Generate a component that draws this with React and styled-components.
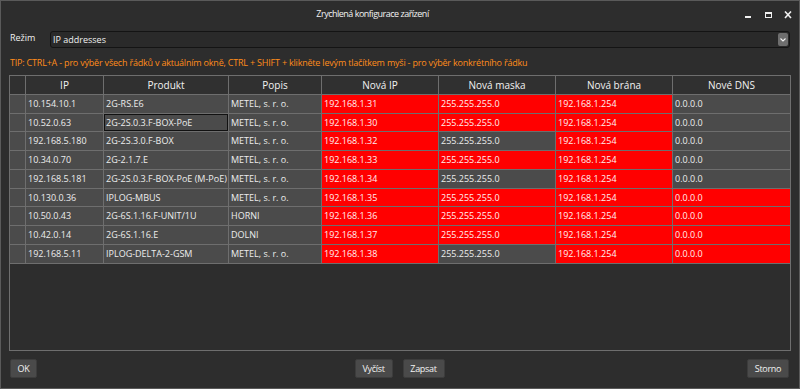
import React from "react";
import styled, { createGlobalStyle } from "styled-components";

const Global = createGlobalStyle`
  html, body { margin: 0; padding: 0; background: #2d2d2d; }
  body { font-family: "Open Sans", "Noto Sans", "DejaVu Sans", sans-serif; }
  * { box-sizing: border-box; }
`;

const Window = styled.div`
  width: 800px;
  height: 389px;
  border: 1px solid #5a5a5a;
  background: #2d2d2d;
  display: flex;
  flex-direction: column;
  color: #f0f0f0;
  overflow: hidden;
`;

const TitleBar = styled.div`
  height: 25px;
  display: flex;
  align-items: center;
  flex: none;
`;

const Title = styled.div`
  flex: 1;
  text-align: center;
  font-size: 9px;
  letter-spacing: -0.5px;
  color: #f2f2f2;
`;

const Controls = styled.div`
  display: flex;
  align-items: center;
  gap: 12px;
  padding-right: 7px;
  padding-top: 2px;
`;

const ModeRow = styled.div`
  display: flex;
  align-items: flex-start;
  margin-top: 5px;
  padding: 0 9px 0 9px;
  flex: none;
`;

const Label = styled.div`
  width: 40px;
  font-size: 9px;
  line-height: 12px;
  padding-top: 1px;
`;

const Select = styled.div`
  flex: 1;
  height: 17px;
  border: 1px solid #141414;
  border-radius: 3px;
  background: #2a2a2a;
  display: flex;
  align-items: center;
  justify-content: space-between;
  padding: 0 1px 0 2px;
  font-size: 9px;
`;

const Arrow = styled.div`
  width: 10px;
  height: 13px;
  border-radius: 2px;
  background: #6e6e6e;
  display: flex;
  align-items: center;
  justify-content: center;
`;

const Tip = styled.div`
  margin-top: 9px;
  padding-left: 9px;
  font-size: 9px;
  letter-spacing: -0.2px;
  line-height: 12px;
  color: #ff8c1a;
  white-space: nowrap;
  flex: none;
`;

const TableFrame = styled.div`
  margin: 6px 8px 0 8px;
  height: 276px;
  border: 1px solid #6e6e6e;
  background: #2d2d2d;
  overflow: hidden;
  flex: none;
`;

const Grid = styled.div`
  display: grid;
  grid-template-columns: 15px 77px 124px 92px 116px 116px 116px 117px;
  grid-template-rows: 18px;
  grid-auto-rows: 17.74px;
  gap: 1px;
  padding-bottom: 1px;
  background: #6e6e6e;
`;

const HeadCell = styled.div`
  background: #303030;
  font-size: 10px;
  line-height: 18px;
  text-align: center;
  color: #f2f2f2;
  white-space: nowrap;
  overflow: hidden;
`;

const Cell = styled.div`
  background: ${(p) => (p.$red ? "#ff0000" : "#4b4b4b")};
  color: ${(p) => (p.$red ? "#fff0f0" : "#ededed")};
  box-shadow: ${(p) => (p.$focused ? "inset 0 0 0 1px #111" : "none")};
  font-size: 9px;
  line-height: 17.74px;
  padding-left: 2px;
  white-space: nowrap;
  overflow: hidden;
`;

const Footer = styled.div`
  display: grid;
  grid-template-columns: 1fr auto 1fr;
  align-items: center;
  margin-top: 8px;
  padding: 0 10px 0 9px;
  flex: none;
`;

const Group = styled.div`
  display: flex;
  gap: 10px;
  justify-self: ${(p) => p.$align || "center"};
`;

const Button = styled.div`
  height: 19px;
  min-width: ${(p) => p.$w || 27}px;
  padding: 0 4px;
  border-radius: 2px;
  background: #4a4a4a;
  border: 1px solid #3c3c3c;
  font-size: 9px;
  letter-spacing: -0.3px;
  display: flex;
  align-items: center;
  justify-content: center;
  color: #f2f2f2;
`;

const headers = ["", "IP", "Produkt", "Popis", "Nová IP", "Nová maska", "Nová brána", "Nové DNS"];

const rows = [
  ["10.154.10.1", "2G-RS.E6", "METEL, s. r. o.", "192.168.1.31", [1, 1, 1, 0]],
  ["10.52.0.63", "2G-2S.0.3.F-BOX-PoE", "METEL, s. r. o.", "192.168.1.30", [1, 1, 1, 0]],
  ["192.168.5.180", "2G-2S.3.0.F-BOX", "METEL, s. r. o.", "192.168.1.32", [1, 0, 1, 0]],
  ["10.34.0.70", "2G-2.1.7.E", "METEL, s. r. o.", "192.168.1.33", [1, 1, 1, 0]],
  ["192.168.5.181", "2G-2S.0.3.F-BOX-PoE (M-PoE)", "METEL, s. r. o.", "192.168.1.34", [1, 0, 1, 0]],
  ["10.130.0.36", "IPLOG-MBUS", "METEL, s. r. o.", "192.168.1.35", [1, 1, 1, 1]],
  ["10.50.0.43", "2G-6S.1.16.F-UNIT/1U", "HORNI", "192.168.1.36", [1, 1, 1, 1]],
  ["10.42.0.14", "2G-6S.1.16.E", "DOLNI", "192.168.1.37", [1, 1, 1, 1]],
  ["192.168.5.11", "IPLOG-DELTA-2-GSM", "METEL, s. r. o.", "192.168.1.38", [1, 0, 1, 1]],
];

const Minimize = () => (
  <svg width="8" height="8" viewBox="0 0 8 8">
    <rect x="1" y="5" width="6" height="2" fill="#f0f0f0" />
  </svg>
);
const Maximize = () => (
  <svg width="8" height="8" viewBox="0 0 8 8">
    <rect x="1.5" y="1.5" width="6" height="5" fill="none" stroke="#f0f0f0" strokeWidth="1" />
    <rect x="1" y="1" width="7" height="2" fill="#f0f0f0" />
  </svg>
);
const Close = () => (
  <svg width="8" height="8" viewBox="0 0 8 8">
    <path d="M1 0.5 L7 7 M7 0.5 L1 7" stroke="#f0f0f0" strokeWidth="1.6" />
  </svg>
);

export default function App() {
  return (
    <>
      <Global />
      <Window>
        <TitleBar>
          <Title>Zrychlená konfigurace zařízení</Title>
          <Controls>
            <Minimize />
            <Maximize />
            <Close />
          </Controls>
        </TitleBar>
        <ModeRow>
          <Label>Režim</Label>
          <Select>
            <span>IP addresses</span>
            <Arrow>
              <svg width="6" height="4" viewBox="0 0 6 4">
                <path d="M0.5 0.5 L3 3 L5.5 0.5" fill="none" stroke="#f4f4f4" strokeWidth="1.1" />
              </svg>
            </Arrow>
          </Select>
        </ModeRow>
        <Tip>
          TIP: CTRL+A - pro výběr všech řádků v aktuálním okně, CTRL + SHIFT + klikněte levým tlačítkem myši - pro výběr konkrétního řádku
        </Tip>
        <TableFrame>
          <Grid>
            {headers.map((h, i) => (
              <HeadCell key={i}>{h}</HeadCell>
            ))}
            {rows.map((r, ri) => (
              <React.Fragment key={ri}>
                <Cell />
                <Cell>{r[0]}</Cell>
                <Cell $focused={ri === 1}>{r[1]}</Cell>
                <Cell>{r[2]}</Cell>
                <Cell $red={r[4][0]}>{r[3]}</Cell>
                <Cell $red={r[4][1]}>255.255.255.0</Cell>
                <Cell $red={r[4][2]}>192.168.1.254</Cell>
                <Cell $red={r[4][3]}>0.0.0.0</Cell>
              </React.Fragment>
            ))}
          </Grid>
        </TableFrame>
        <Footer>
          <Group $align="start">
            <Button>OK</Button>
          </Group>
          <Group>
            <Button $w={38}>Vyčíst</Button>
            <Button $w={42}>Zapsat</Button>
          </Group>
          <Group $align="end">
            <Button $w={42}>Storno</Button>
          </Group>
        </Footer>
      </Window>
    </>
  );
}
